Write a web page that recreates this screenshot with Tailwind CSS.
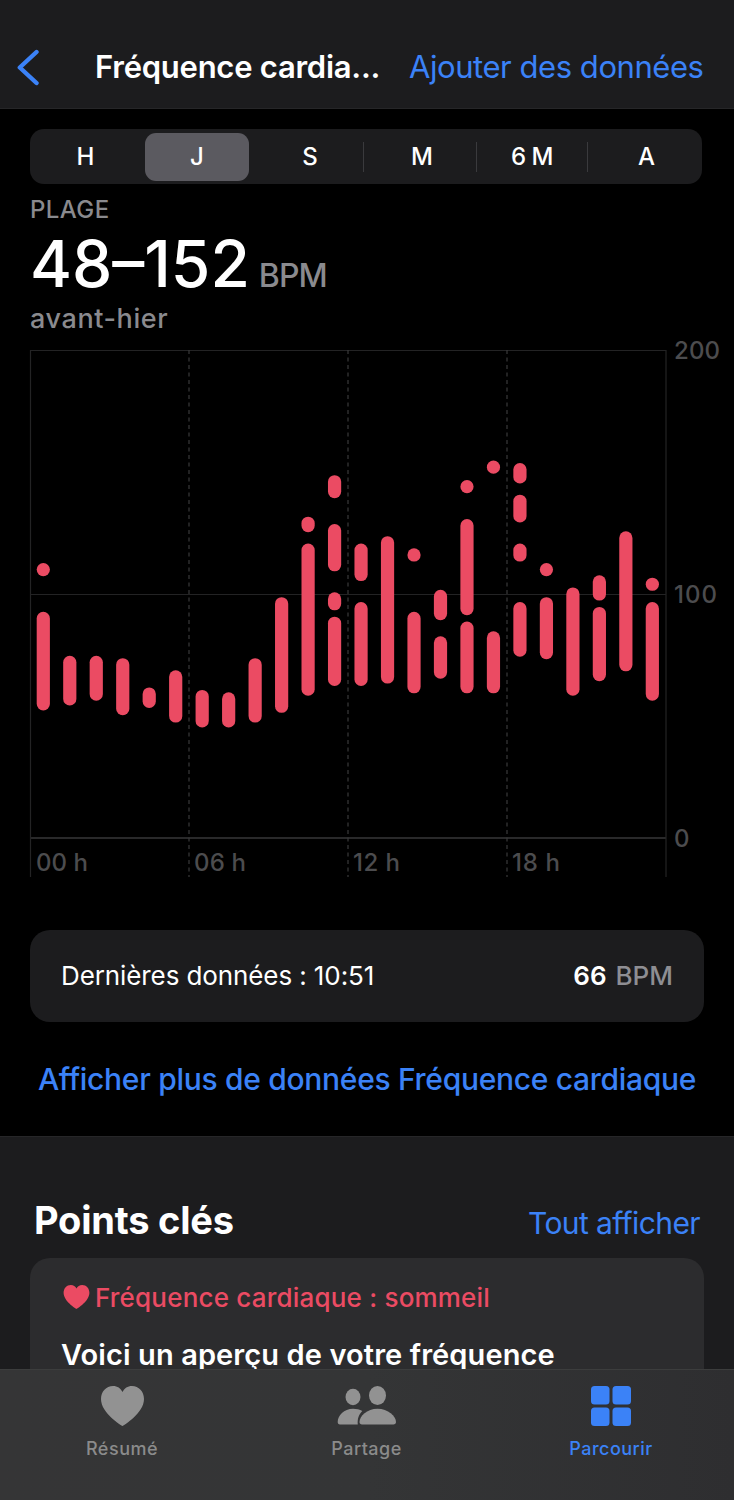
<!DOCTYPE html>
<html lang="fr">
<head>
  <meta charset="utf-8">
  <title>Fréquence cardiaque</title>
  <script src="https://cdn.jsdelivr.net/npm/@tailwindcss/browser@4"></script>
</head>
<body class="bg-black">
  <div class="relative flex flex-col w-[734px] h-[1500px] overflow-hidden bg-black font-['Inter',sans-serif] text-white whitespace-nowrap">

    <!-- Navigation bar -->
    <header class="flex items-center h-[109px] shrink-0 pt-[27px] pl-[17px] bg-[#1c1c1e] border-b border-[#262628]">
      <svg class="w-[23px] h-[38px]" viewBox="0 0 23 38" fill="none" stroke="#3b82f7" stroke-width="4.400" stroke-linecap="round" stroke-linejoin="round">
        <path d="M19.500 3L2.800 18.500L19.500 34"/>
      </svg>
      <h1 class="ml-[55px] w-[314px] text-[31px] font-semibold tracking-[-0.25px]">Fréquence cardia...</h1>
      <a class="text-[31px] tracking-[-0.45px] text-[#3b82f7]">Ajouter des données</a>
    </header>

    <main class="flex flex-col">
      <!-- Period picker -->
      <div class="flex items-center mt-5 ml-[30px] w-[672px] h-[55px] rounded-[14px] bg-[#1c1c1e] text-[24px] font-medium text-center *:shrink-0">
        <span class="w-[111px]">H</span>
        <span class="ml-1 w-[104px] h-[48px] leading-[48px] rounded-[11px] bg-[#5b5a60]">J</span>
        <span class="ml-1 w-[110px] pl-1">S</span>
        <span class="w-px h-[30px] bg-[#3a3a3d]"></span>
        <span class="w-[112px] pl-1">M</span>
        <span class="w-px h-[30px] bg-[#3a3a3d]"></span>
        <span class="w-[110px] tracking-[-0.5px]">6 M</span>
        <span class="w-px h-[30px] bg-[#3a3a3d]"></span>
        <span class="w-[113px] pl-1">A</span>
      </div>

      <div class="pl-[30px]">
        <p class="mt-[12px] text-[24px] leading-[28px] font-medium tracking-[0.4px] text-[#8a8a8e]">PLAGE</p>
        <p class="flex items-baseline mt-[4px] h-[72px] leading-[72px] text-[64px]">
          <span class="font-medium">48–152</span>
          <span class="ml-[9px] text-[32px] font-medium tracking-[-0.9px] text-[#8a8a8e]">BPM</span>
        </p>
        <p class="mt-[2px] text-[27px] leading-[34px] font-medium tracking-[0.6px] text-[#8a8a8e]">avant-hier</p>
      </div>

      <!-- Chart -->
      <svg id="chart" class="mt-[4px] w-[734px] h-[540px] overflow-visible" viewBox="0 340 734 540">
        <g fill="none" stroke="#232324" stroke-width="1.200">
          <path d="M30 350.500H666M30 594.500H666"/>
          <path d="M30 838H666" stroke="#29292a" stroke-width="2"/>
          <path d="M30.500 350V877M666 350V877"/>
          <path d="M189 350V877M348 350V877M507 350V877" stroke="#39393a" stroke-dasharray="4 3.500"/>
        </g>
        <g fill="#4c4c4e" font-size="24" font-weight="500">
          <text x="674" y="359" textLength="46">200</text>
          <text x="674" y="603" textLength="43">100</text>
          <text x="674" y="847">0</text>
          <text x="36" y="871" textLength="52">00 h</text>
          <text x="194" y="871" textLength="52">06 h</text>
          <text x="353" y="871" textLength="47">12 h</text>
          <text x="512" y="871" textLength="48">18 h</text>
        </g>
        <g id="bars" stroke="#eb4b63" stroke-width="13.200" stroke-linecap="round"></g>
      </svg>

      <div class="flex items-center mt-[50px] mx-[30px] h-[92px] rounded-[20px] px-[31px] pb-[2px] bg-[#1c1c1e] text-[26px]">
        <span class="tracking-[-0.1px]">Dernières données : 10:51</span>
        <span class="ml-auto font-semibold">66</span>
        <span class="ml-[9px] font-medium text-[#8e8e93]">BPM</span>
      </div>

      <a class="mt-[37px] h-[40px] leading-[40px] text-center text-[30px] font-medium tracking-[-0.3px] text-[#3b82f7]">Afficher plus de données Fréquence cardiaque</a>
    </main>

    <!-- Highlights -->
    <section class="mt-[37px] h-[364px] shrink-0 bg-[#1c1c1e] border-t border-[#262628] px-[30px]">
      <div class="flex items-baseline justify-between pt-[59px] pl-1 pr-1">
        <h2 class="text-[38px] leading-[48px] font-bold tracking-[-0.2px]">Points clés</h2>
        <a class="text-[30px] tracking-[-0.6px] text-[#3b82f7]">Tout afficher</a>
      </div>
      <div class="mt-[12px] h-[260px] rounded-[20px] bg-[#2c2c2e] px-[31px] pt-[21px]">
        <div class="flex items-center h-9 text-[26px] font-medium tracking-[0.2px] text-[#eb4b63]">
          <svg class="ml-[2px] mr-[5px] w-[27px] h-[24px]" viewBox="0 0 43 40" fill="currentColor">
            <path d="M21.500 40C20 39.300 0 27 0 13C0 5.500 5.200 0 12 0C16.500 0 19.600 2.300 21.500 6C23.400 2.300 26.500 0 31 0C37.800 0 43 5.500 43 13C43 27 23 39.300 21.500 40Z"/>
          </svg>
          <span>Fréquence cardiaque : sommeil</span>
        </div>
        <p class="mt-[19px] text-[29px] leading-[42px] font-semibold tracking-[0.1px]">Voici un aperçu de votre fréquence</p>
      </div>
    </section>

    <!-- Tab bar -->
    <nav class="absolute inset-x-0 bottom-0 flex h-[131px] pt-4 border-t border-[#3c3d3d] bg-linear-to-r from-[#353536] via-[#343536] to-[#2e2e30] text-[18px] leading-[24px] font-medium tracking-[0.5px] text-[#8b8b8b]">
      <a class="flex flex-col items-center w-[244px]">
        <svg class="w-[43px] h-[40px]" viewBox="0 0 43 40" fill="#929292">
          <path d="M21.500 40C20 39.300 0 27 0 13C0 5.500 5.200 0 12 0C16.500 0 19.600 2.300 21.500 6C23.400 2.300 26.500 0 31 0C37.800 0 43 5.500 43 13C43 27 23 39.300 21.500 40Z"/>
        </svg>
        <span class="mt-[11px]">Résumé</span>
      </a>
      <a class="flex flex-col items-center w-[245px]">
        <svg class="w-[60px] h-[40px]" viewBox="0 0 60 40" fill="#929292">
          <ellipse cx="16" cy="11" rx="7.500" ry="8.300"/>
          <ellipse cx="40.500" cy="9.500" rx="8.500" ry="9.500"/>
          <path d="M25.300 25C21.500 29 20.300 33 20.800 38.500H3C1.400 38.500 0.700 37.500 0.700 36C0.700 29.500 7 22.800 16 22.800C19.500 22.800 22.800 23.600 25.300 25Z"/>
          <path d="M40.500 22.800C51 22.800 59 30.500 59 36C59 37.600 58 38.500 56.300 38.500H25C23.300 38.500 22.500 37.600 22.500 36C22.500 30.500 30 22.800 40.500 22.800Z"/>
        </svg>
        <span class="mt-[11px]">Partage</span>
      </a>
      <a class="flex flex-col items-center w-[244px] text-[#3b82f7]">
        <svg class="w-[40px] h-[40px]" viewBox="0 0 40 40" fill="currentColor">
          <rect width="18.500" height="18.500" rx="3.500"/>
          <rect x="21.500" width="18.500" height="18.500" rx="3.500"/>
          <rect y="21.500" width="18.500" height="18.500" rx="3.500"/>
          <rect x="21.500" y="21.500" width="18.500" height="18.500" rx="3.500"/>
        </svg>
        <span class="mt-[11px]">Parcourir</span>
      </a>
    </nav>
  </div>

  <script>
    // [high, low] bpm ranges for each hour of the day
    const hours = [
      [[110, 110], [90, 55]],
      [[72, 57]],
      [[72, 59]],
      [[71, 53]],
      [[59, 56]],
      [[66, 50]],
      [[58, 48]],
      [[57, 48]],
      [[71, 50]],
      [[96, 54]],
      [[129, 128], [118, 61]],
      [[146, 142], [126, 112], [98, 96], [88, 65]],
      [[118, 108], [94, 65]],
      [[121, 66]],
      [[116, 116], [90, 62]],
      [[99, 92], [80, 68]],
      [[144, 144], [128, 94], [86, 62]],
      [[152, 152], [82, 62]],
      [[151, 148], [138, 132], [118, 116], [94, 77]],
      [[110, 110], [96, 76]],
      [[100, 61]],
      [[105, 100], [92, 67]],
      [[123, 71]],
      [[104, 104], [94, 59]]
    ];
    const bars = document.getElementById("bars");

    hours.forEach((ranges, i) => {
      const x = 43.3 + i * 26.48;
      ranges.forEach(([high, low]) => {
        const line = document.createElementNS("http://www.w3.org/2000/svg", "line");
        line.setAttribute("x1", x);
        line.setAttribute("x2", x);
        line.setAttribute("y1", 838 - high * 2.44);
        line.setAttribute("y2", 838.01 - low * 2.44);
        bars.appendChild(line);
      });
    });
  </script>
</body>
</html>
